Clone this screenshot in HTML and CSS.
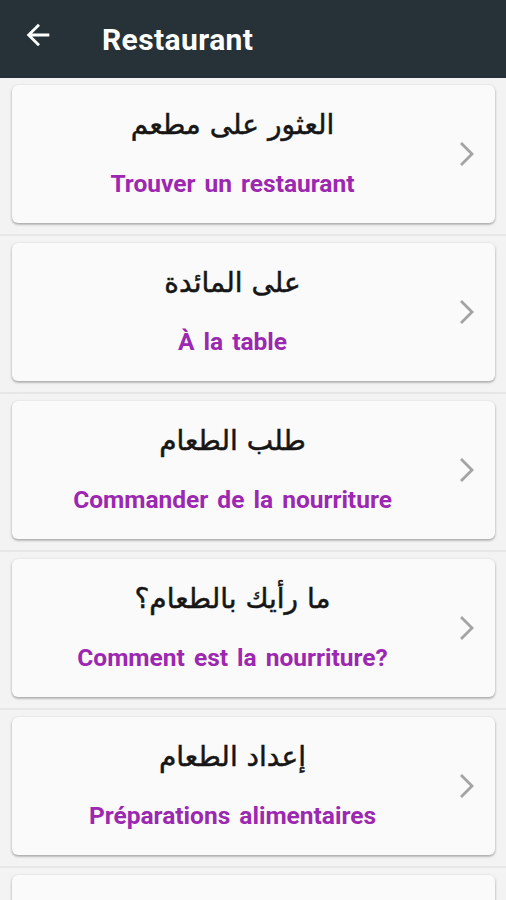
FILE: index.html
```html
<!DOCTYPE html>
<html lang="fr">
<head>
    <meta charset="UTF-8">
    <meta name="viewport" content="width=device-width, initial-scale=1.0">
    <title>Restaurant</title>
    <link rel="stylesheet" href="styles.css">
</head>
<body>
    <header class="toolbar">
        <button class="back" aria-label="Retour">
            <svg width="34" height="34" viewBox="0 0 24 24"><path d="M20 11H7.83l5.59-5.59L12 4l-8 8 8 8 1.41-1.41L7.83 13H20v-2z" fill="#fff"/></svg>
        </button>
        <h1>Restaurant</h1>
    </header>

    <ul class="list">
        <li class="row">
            <div class="card">
                <div class="texts">
                    <p class="ar" dir="rtl">العثور على مطعم</p>
                    <p class="fr">Trouver un restaurant</p>
                </div>
                <span class="chevron"><svg width="16" height="26" viewBox="0 0 16 26"><path d="M2 2l11 11L2 24" fill="none" stroke="#a3a3a3" stroke-width="2.8"/></svg></span>
            </div>
        </li>
        <li class="row">
            <div class="card">
                <div class="texts">
                    <p class="ar" dir="rtl">على المائدة</p>
                    <p class="fr">À la table</p>
                </div>
                <span class="chevron"><svg width="16" height="26" viewBox="0 0 16 26"><path d="M2 2l11 11L2 24" fill="none" stroke="#a3a3a3" stroke-width="2.8"/></svg></span>
            </div>
        </li>
        <li class="row">
            <div class="card">
                <div class="texts">
                    <p class="ar" dir="rtl">طلب الطعام</p>
                    <p class="fr">Commander de la nourriture</p>
                </div>
                <span class="chevron"><svg width="16" height="26" viewBox="0 0 16 26"><path d="M2 2l11 11L2 24" fill="none" stroke="#a3a3a3" stroke-width="2.8"/></svg></span>
            </div>
        </li>
        <li class="row">
            <div class="card">
                <div class="texts">
                    <p class="ar" dir="rtl">ما رأيك بالطعام؟</p>
                    <p class="fr">Comment est la nourriture?</p>
                </div>
                <span class="chevron"><svg width="16" height="26" viewBox="0 0 16 26"><path d="M2 2l11 11L2 24" fill="none" stroke="#a3a3a3" stroke-width="2.8"/></svg></span>
            </div>
        </li>
        <li class="row">
            <div class="card">
                <div class="texts">
                    <p class="ar" dir="rtl">إعداد الطعام</p>
                    <p class="fr">Préparations alimentaires</p>
                </div>
                <span class="chevron"><svg width="16" height="26" viewBox="0 0 16 26"><path d="M2 2l11 11L2 24" fill="none" stroke="#a3a3a3" stroke-width="2.8"/></svg></span>
            </div>
        </li>
        <li class="row">
            <div class="card">
                <div class="texts">
                    <p class="ar" dir="rtl">دفع الفاتورة</p>
                    <p class="fr">Payer l'addition</p>
                </div>
                <span class="chevron"><svg width="16" height="26" viewBox="0 0 16 26"><path d="M2 2l11 11L2 24" fill="none" stroke="#a3a3a3" stroke-width="2.8"/></svg></span>
            </div>
        </li>
    </ul>
</body>
</html>
```

FILE: styles.css
```css
* {
    margin: 0;
    padding: 0;
    box-sizing: border-box;
}

body {
    background: #f3f3f3;
    font-family: Roboto, "Liberation Sans", sans-serif;
    height: 900px;
    overflow: hidden;
}

.toolbar {
    height: 78px;
    background: #263238;
    display: flex;
    align-items: center;
    padding: 0 0 0 21px;
}

.back {
    background: none;
    border: none;
    width: 34px;
    height: 34px;
    display: flex;
    align-items: center;
    justify-content: center;
    margin-top: -8px;
}

.toolbar h1 {
    color: #fff;
    font-size: 30px;
    font-weight: 700;
    margin-left: 47px;
    letter-spacing: 0.4px;
}

.list {
    list-style: none;
}

.row {
    padding: 7px 11px 11px 12px;
    border-bottom: 2px solid #e6e6e6;
}

.card {
    height: 138px;
    background: #fafafa;
    border-radius: 6px;
    box-shadow: 0 1px 3px rgba(0, 0, 0, 0.28), 0 2px 2px rgba(0, 0, 0, 0.1);
    display: flex;
    align-items: center;
}

.texts {
    flex: 1;
    text-align: center;
    padding-left: 14px;
}

.ar {
    font-family: "DejaVu Sans", "Noto Sans", sans-serif;
    font-size: 28px;
    color: #161616;
    -webkit-text-stroke: 0.5px #161616;
    line-height: 38px;
    margin-top: -3px;
    margin-bottom: 25px;
}

.fr {
    font-size: 24.5px;
    font-weight: 700;
    color: #9c27b0;
    line-height: 30px;
    word-spacing: 3px;
}

.chevron {
    width: 56px;
    display: flex;
    justify-content: center;
}
```
